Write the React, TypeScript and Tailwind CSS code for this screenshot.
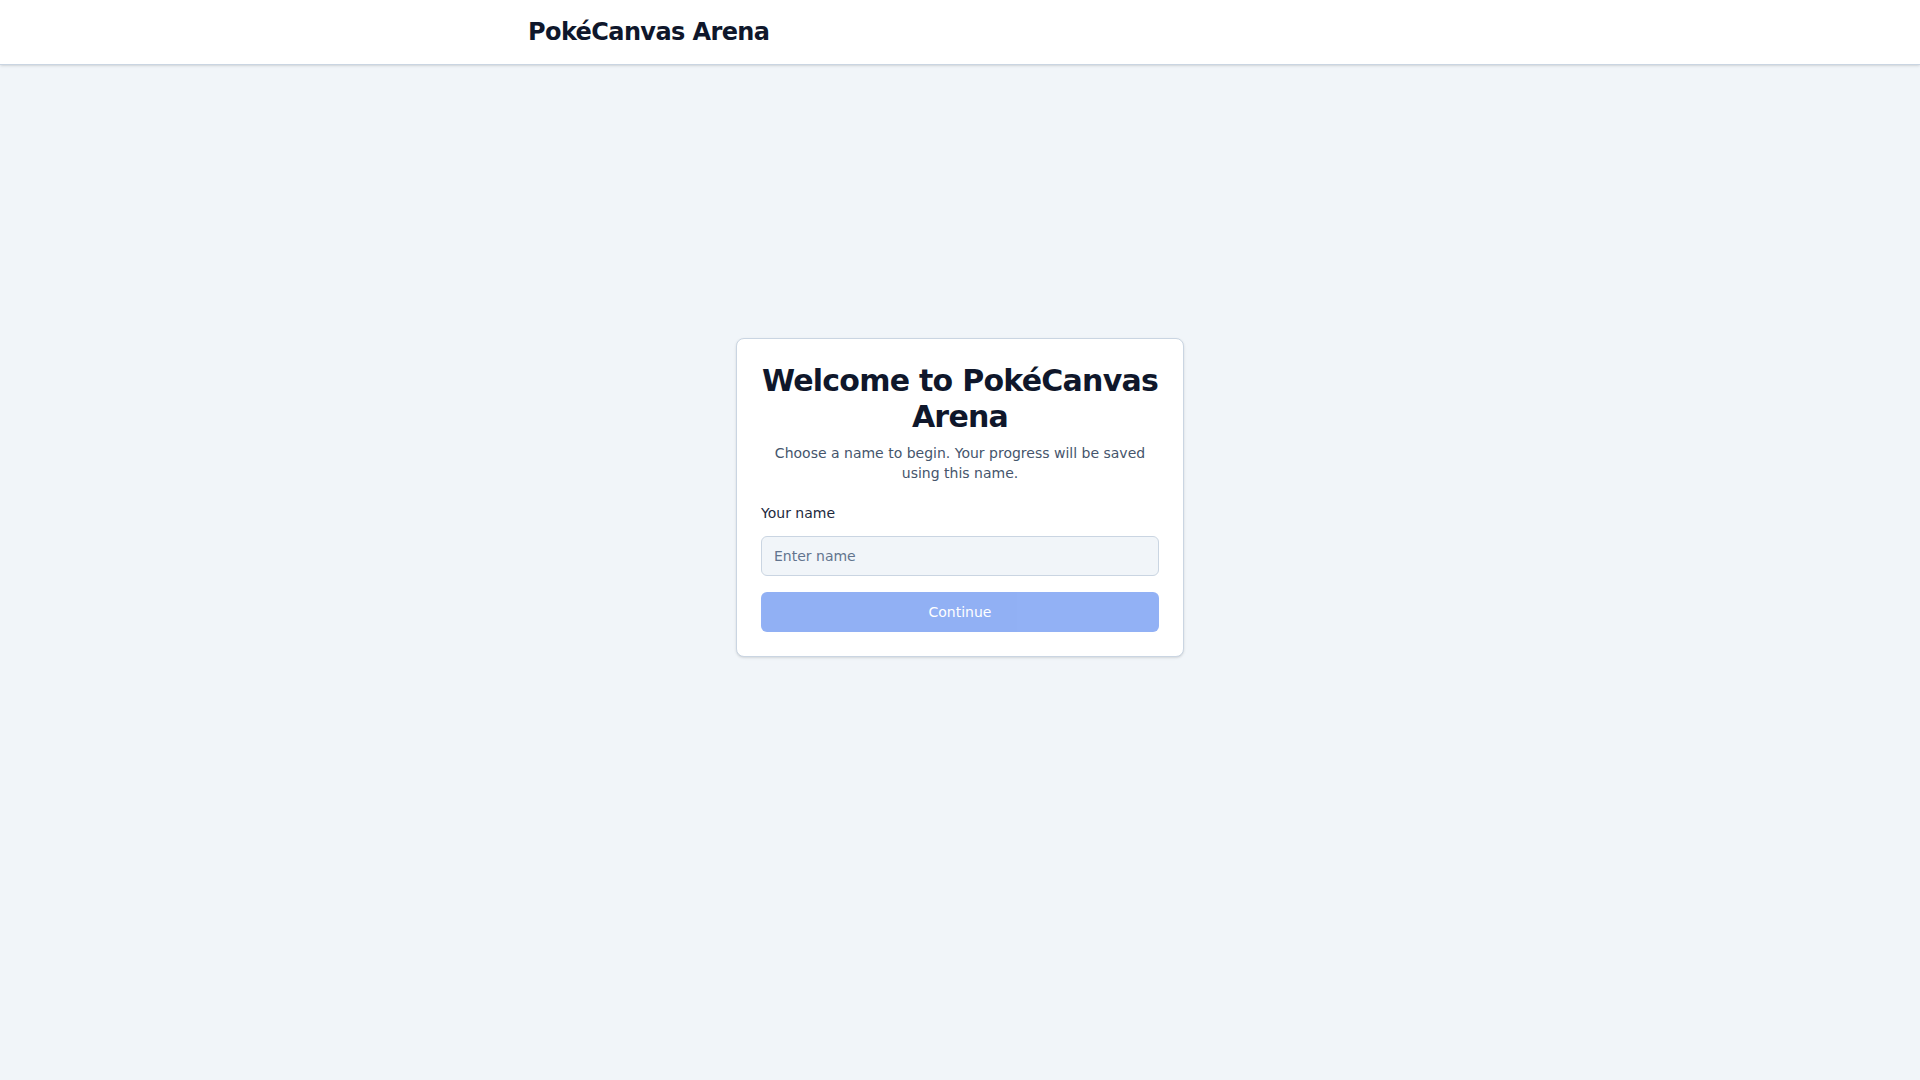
import { useState } from "react";

export default function App() {
  const [name, setName] = useState("");

  return (
    <div className="min-h-screen bg-slate-100 font-['DejaVu_Sans',sans-serif] text-slate-900">
      <header className="bg-white border-b border-slate-300 shadow-sm">
        <div className="max-w-4xl mx-auto px-4 py-4">
          <h1 className="text-2xl font-bold tracking-tight text-slate-900">PokéCanvas Arena</h1>
        </div>
      </header>

      <main className="min-h-[80vh] flex items-center justify-center px-4">
        <div className="w-full max-w-md rounded-lg border border-slate-300 bg-white p-6 shadow-sm">
          <div className="text-center mb-5">
            <h2 className="text-3xl font-bold tracking-tight text-slate-900">
              Welcome to PokéCanvas Arena
            </h2>
            <p className="mt-2 text-sm text-slate-600">
              Choose a name to begin. Your progress will be saved using this name.
            </p>
          </div>

          <form onSubmit={(e) => e.preventDefault()} className="flex flex-col">
            <label className="text-sm text-slate-800 mb-[13px]">Your name</label>
            <input
              value={name}
              onChange={(e) => setName(e.target.value)}
              placeholder="Enter name"
              className="h-10 w-full rounded-md border border-slate-300 bg-slate-100 px-3 text-sm placeholder:text-slate-500 outline-none"
            />
            <button
              type="submit"
              disabled={!name.trim()}
              className="mt-4 h-10 w-full rounded-md bg-[#2563eb] text-sm text-white disabled:opacity-50"
            >
              Continue
            </button>
          </form>
        </div>
      </main>
    </div>
  );
}
